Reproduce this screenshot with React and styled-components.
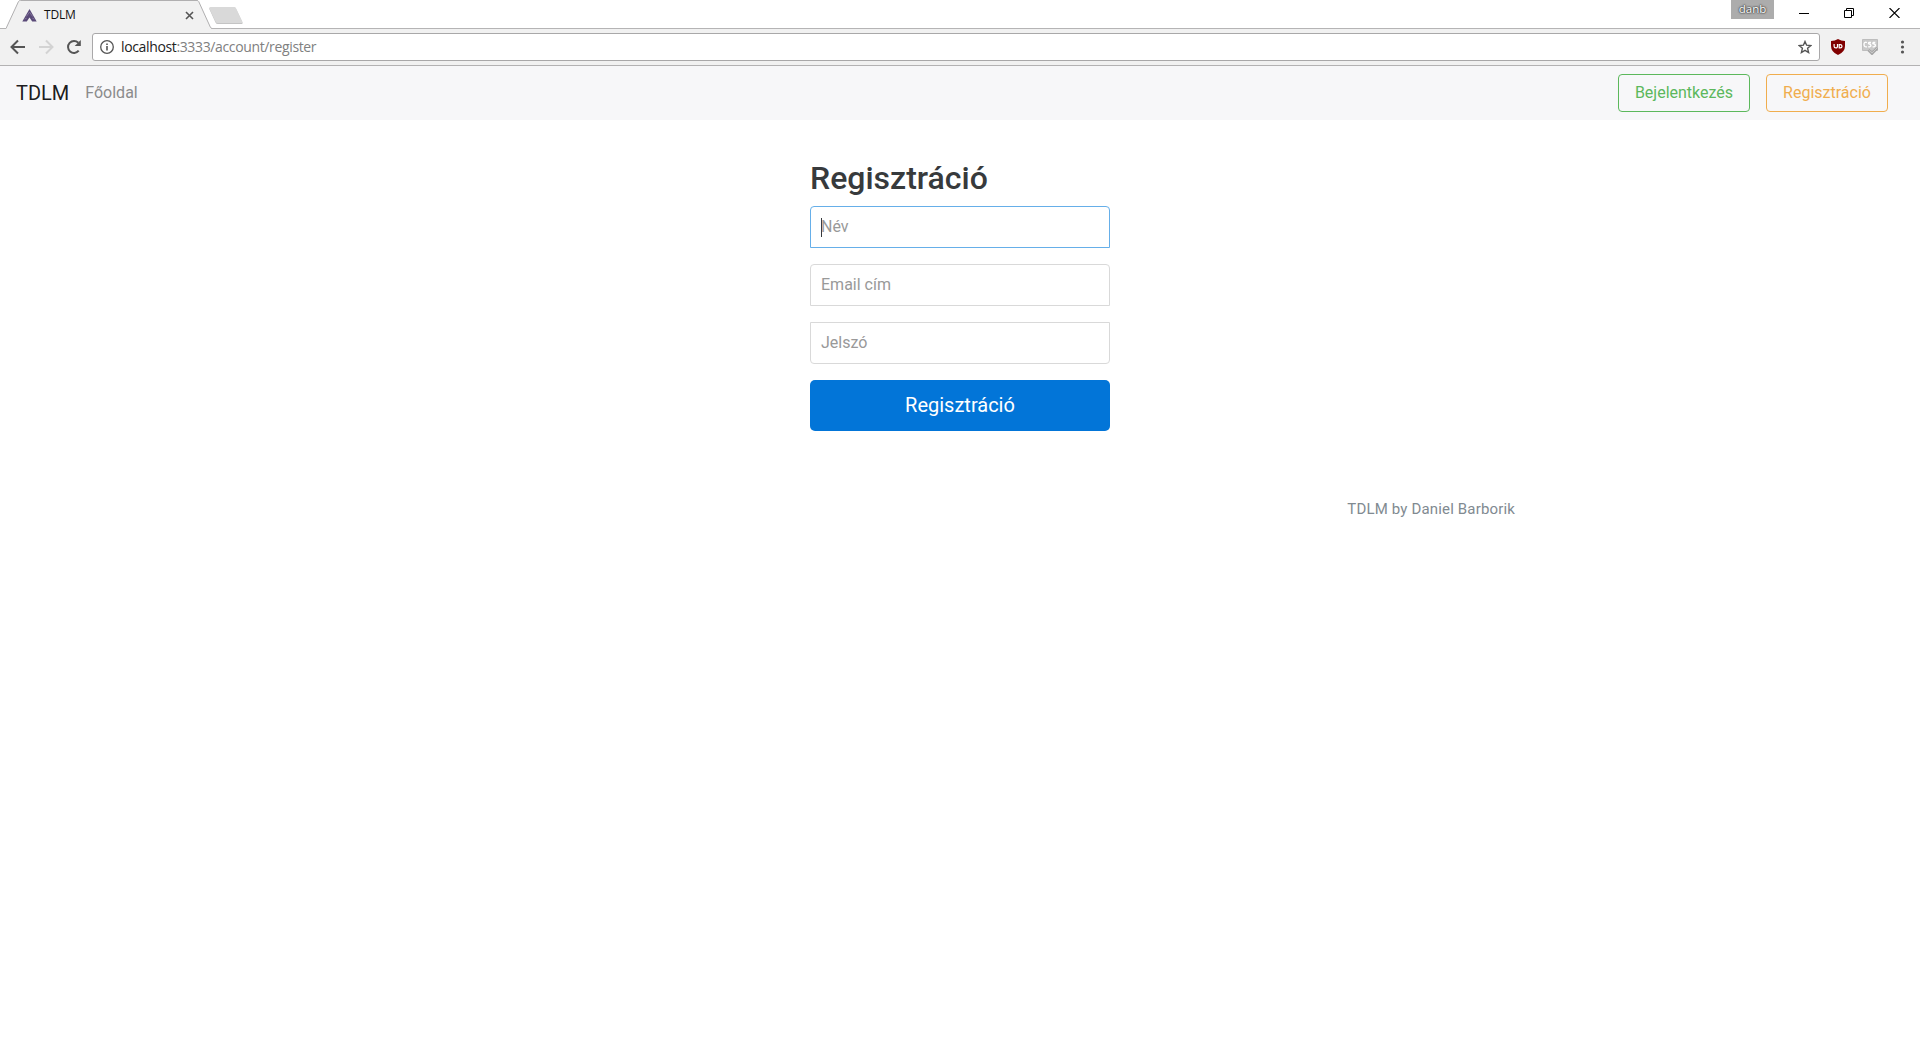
import React from 'react';
import styled, { createGlobalStyle } from 'styled-components';

const Global = createGlobalStyle`
  *, *::before, *::after { box-sizing: border-box; }
  html, body { margin: 0; background: #fff; }
  body { font: 400 16px/24px Roboto, "Liberation Sans", sans-serif; color: #373a3c; overflow: hidden; }
  h1, p { margin: 0; }
  svg { display: block; flex: none; }
`;

const Window = styled.div`
  height: 1040px;
  display: flex;
  flex-direction: column;
`;

const TabStrip = styled.div`
  height: 29px;
  display: flex;
  align-items: flex-start;
  padding-left: 6px;
  border-bottom: 1px solid #b5b4b5;
`;

const Tab = styled.div`
  position: relative;
  width: 206px;
  height: 29px;
  display: flex;
  align-items: center;
  padding: 1px 18px 0 16px;
  font: 12px/16px "Open Sans", "Noto Sans", sans-serif;
  color: #111;
`;

const TabShape = styled.svg`
  position: absolute;
  left: 0;
  top: 0;
`;

const TabTitle = styled.span`
  position: relative;
  flex: 1;
  margin-left: 7px;
  letter-spacing: -0.2px;
`;

const Layer = styled.span`
  position: relative;
  display: flex;
`;

const NewTab = styled.svg`
  margin: 6px 0 0 -4px;
`;

const WindowControls = styled.div`
  display: flex;
  margin-left: auto;
  align-items: flex-start;
`;

const UserTag = styled.div`
  width: 43px;
  height: 19px;
  background: #acacac;
  color: #fff;
  font: 11.5px/17px "Open Sans", "Noto Sans", sans-serif;
  text-align: center;
  text-shadow: 0 0 1px #333, 0 0 2px #444, 0 0 2px #555;
  margin-right: 7px;
`;

const ControlButton = styled.div`
  width: ${(p) => p.$width};
  height: 26px;
  display: flex;
  align-items: center;
  justify-content: center;
`;

const CloseButton = styled(ControlButton)`
  justify-content: flex-start;
  padding-left: 18px;
`;

const Toolbar = styled.div`
  height: 37px;
  display: flex;
  align-items: flex-start;
  padding: 4px 11px 0 9px;
  background: #f1f1f1;
  border-bottom: 1px solid #b3b2b3;
`;

const ToolIcon = styled.div`
  width: ${(p) => p.$width};
  height: 28px;
  display: flex;
  align-items: center;
  justify-content: ${(p) => p.$align || 'flex-start'};
`;

const AddressBar = styled.div`
  flex: 1;
  height: 28px;
  display: flex;
  align-items: center;
  padding: 0 7px;
  background: #fff;
  border: 1px solid #a9a8a9;
  border-radius: 3px;
`;

const Url = styled.span`
  flex: 1;
  margin-left: 7px;
  font: 14px/20px "Open Sans", "Noto Sans", sans-serif;
  letter-spacing: -0.36px;
  color: #808080;
`;

const Host = styled.span`
  color: #222;
`;

const Navbar = styled.nav`
  height: 54px;
  display: flex;
  align-items: center;
  padding: 0 32px 0 16px;
  background: #f7f7f9;
`;

const Brand = styled.span`
  font-size: 20px;
  line-height: 30px;
  color: rgba(0, 0, 0, 0.9);
  margin-right: 16px;
`;

const NavLink = styled.span`
  flex: 1;
  color: #8b8b8c;
`;

const OutlineButton = styled.button`
  width: ${(p) => p.$width};
  height: 38px;
  margin-left: 16px;
  padding: 0;
  font: 400 16px/24px Roboto, sans-serif;
  color: ${(p) => p.$color};
  background: transparent;
  border: 1px solid ${(p) => p.$color};
  border-radius: 4px;
`;

const Form = styled.main`
  width: 300px;
  margin: 40px auto 0;
  display: flex;
  flex-direction: column;
`;

const Heading = styled.h1`
  font-size: 32px;
  line-height: 37px;
  font-weight: 500;
  margin: 0 0 9px;
`;

const Field = styled.div`
  height: 42px;
  display: flex;
  align-items: center;
  padding: 0 10px;
  margin-bottom: 16px;
  color: #999;
  background: #fff;
  border: 1px solid ${(p) => (p.$focused ? '#66afe9' : '#d9d9d9')};
  border-radius: ${(p) => (p.$last ? '0 0 4px 4px' : '4px 4px 0 0')};
`;

const Caret = styled.span`
  width: 1px;
  height: 19px;
  margin-right: -1px;
  background: #373a3c;
`;

const SubmitButton = styled.button`
  height: 51px;
  padding: 0 0 1px;
  font: 400 20px/30px Roboto, sans-serif;
  color: #fff;
  background: #0275d8;
  border: 0;
  border-radius: 5px;
`;

const Footer = styled.footer`
  width: 1140px;
  margin: 66px auto 0;
  padding-right: 15px;
  text-align: right;
  font-size: 15px;
  letter-spacing: 0.16px;
  color: #818a91;
`;

function Favicon() {
  return (
    <svg width="15" height="13" viewBox="0 0 15 13">
      <path d="M7.5 0 14.7 12.5H10.2L7.5 8.5 4.8 12.5H.3Z" fill="#5a4a78" />
      <path d="M4.3 7.5 7.5 3.2 10.7 7.5M2.6 10l2.1-.8M12.4 10l-2.1-.8" stroke="#8d7fa3" strokeWidth=".8" fill="none" />
    </svg>
  );
}

export default function App() {
  return (
    <Window>
      <Global />
      <TabStrip>
        <Tab>
          <TabShape width="206" height="29" viewBox="0 0 206 29">
            <path d="M0 28.5 12.5 1.5Q13 .5 14.5 .5H191Q192.2 .5 192.7 1.5L204.5 27.5 206 29H0Z" fill="#f1f1f1" />
            <path d="M0 28.5 12.5 1.5Q13 .5 14.5 .5H191Q192.2 .5 192.7 1.5L204.5 27.5 206 28.5" fill="none" stroke="#b0afb0" />
          </TabShape>
          <Layer><Favicon /></Layer>
          <TabTitle>TDLM</TabTitle>
          <Layer>
            <svg width="9" height="9" viewBox="0 0 9 9">
              <path d="m1 1 7 7M8 1 1 8" stroke="#555" strokeWidth="1.6" />
            </svg>
          </Layer>
        </Tab>
        <NewTab width="36" height="20" viewBox="0 0 36 20">
          <path d="M2.5 1.5H26Q27.5 1.5 28 2.8L34.5 16.5Q35 18 33.5 18H10Q8 18 7.5 16.5L1.3 3Q1 1.5 2.5 1.5Z" fill="#c4c4c4" />
          <path d="M2.5 1H26Q27.5 1 28 2.3L34.3 15.5Q34.8 17 33.5 17H10Q8 17 7.5 15.5L1.3 2.5Q1 1 2.5 1Z" fill="#d9d9d9" />
        </NewTab>
        <WindowControls>
          <UserTag>danb</UserTag>
          <ControlButton $width="46px">
            <svg width="10" height="10"><path d="M0 5.5H10" stroke="#000" /></svg>
          </ControlButton>
          <ControlButton $width="44px">
            <svg width="10" height="10" viewBox="0 0 10 10" fill="none" stroke="#000">
              <path d="M.5 2.5H7.5V9.5H.5ZM2.5 2.5V.5H9.5V7.5H7.5" />
            </svg>
          </ControlButton>
          <CloseButton $width="49px">
            <svg width="11" height="10" viewBox="0 0 10 10"><path d="m0 0 10 10M10 0 0 10" stroke="#000" strokeWidth="1.1" /></svg>
          </CloseButton>
        </WindowControls>
      </TabStrip>

      <Toolbar>
        <ToolIcon $width="28px">
          <svg width="18" height="16" viewBox="0 0 18 16" fill="none" stroke="#555" strokeWidth="2">
            <path d="M16 8H3.5M9 1.5 2.5 8 9 14.5" />
          </svg>
        </ToolIcon>
        <ToolIcon $width="29px">
          <svg width="18" height="16" viewBox="0 0 18 16" fill="none" stroke="#d3d3d3" strokeWidth="2">
            <path d="M2 8H14.5M9 1.5 15.5 8 9 14.5" />
          </svg>
        </ToolIcon>
        <ToolIcon $width="26px">
          <svg width="16" height="16" viewBox="0 0 16 16">
            <path d="M12.7 11.7A6 6 0 1 1 12.3 3.7" fill="none" stroke="#555" strokeWidth="2" />
            <path d="M14.8 .9V7H8.7Z" fill="#555" />
          </svg>
        </ToolIcon>
        <AddressBar>
          <svg width="14" height="14" viewBox="0 0 14 14">
            <circle cx="7" cy="7" r="6.3" fill="none" stroke="#555" strokeWidth="1.3" />
            <path d="M7 6V10.6M7 3.4V5" stroke="#555" strokeWidth="1.6" />
          </svg>
          <Url><Host>localhost</Host>:3333/account/register</Url>
          <svg width="14" height="14" viewBox="0 0 14 14">
            <path d="M7 1.5 8.6 5.2 12.8 5.6 9.6 8.3 10.6 12.5 7 10.3 3.4 12.5 4.4 8.3 1.2 5.6 5.4 5.2Z" fill="none" stroke="#555" strokeWidth="1.4" />
          </svg>
        </AddressBar>
        <ToolIcon $width="36px" $align="center">
          <svg width="14" height="16" viewBox="0 0 14 16">
            <path d="M7 0Q10 2 14 2V7Q14 13 7 16 0 13 0 7V2Q4 2 7 0Z" fill="#800000" />
            <path d="M3.1 5V7.2Q3.1 8.9 4.8 8.9T6.5 7.2V5M8.2 5.6H9.2Q11 5.6 11 7.2T9.2 8.9H8.2Z" fill="none" stroke="#fff" strokeWidth="1.2" />
          </svg>
        </ToolIcon>
        <ToolIcon $width="28px" $align="center">
          <svg width="16" height="16" viewBox="0 0 16 16" fill="none">
            <path d="M.5 .5H15.5V11.5H.5Z" fill="#c9c9c9" stroke="#bdbdbd" />
            <path d="M5 3.5Q2 2.5 2 5.5T5 7.8M9 3.5Q6.3 2.8 6.5 4.5 9 5.2 9 6.5 8.5 8.3 6.2 7.6M13.3 3.5Q10.7 2.8 10.8 4.5 13.5 5.2 13.4 6.5 13 8.3 10.6 7.6" stroke="#fff" strokeWidth="1.3" />
            <path d="m6.5 11 3.5 3.5 5.3-5.5" stroke="#a5a5a5" strokeWidth="2.8" />
            <path d="m6.8 11 3.2 3 5-5" stroke="#c8c8c8" strokeWidth="1" />
          </svg>
        </ToolIcon>
        <ToolIcon $width="25px" $align="flex-end">
          <svg width="13" height="14" viewBox="0 0 13 14" fill="#555">
            <circle cx="6.5" cy="2" r="1.6" /><circle cx="6.5" cy="7" r="1.6" /><circle cx="6.5" cy="12" r="1.6" />
          </svg>
        </ToolIcon>
      </Toolbar>

      <Navbar>
        <Brand>TDLM</Brand>
        <NavLink>Főoldal</NavLink>
        <OutlineButton $width="132px" $color="#5cb85c">Bejelentkezés</OutlineButton>
        <OutlineButton $width="122px" $color="#f0ad4e">Regisztráció</OutlineButton>
      </Navbar>

      <Form>
        <Heading>Regisztráció</Heading>
        <Field $focused><Caret />Név</Field>
        <Field>Email cím</Field>
        <Field $last>Jelszó</Field>
        <SubmitButton>Regisztráció</SubmitButton>
      </Form>
      <Footer>TDLM by Daniel Barborik</Footer>
    </Window>
  );
}
